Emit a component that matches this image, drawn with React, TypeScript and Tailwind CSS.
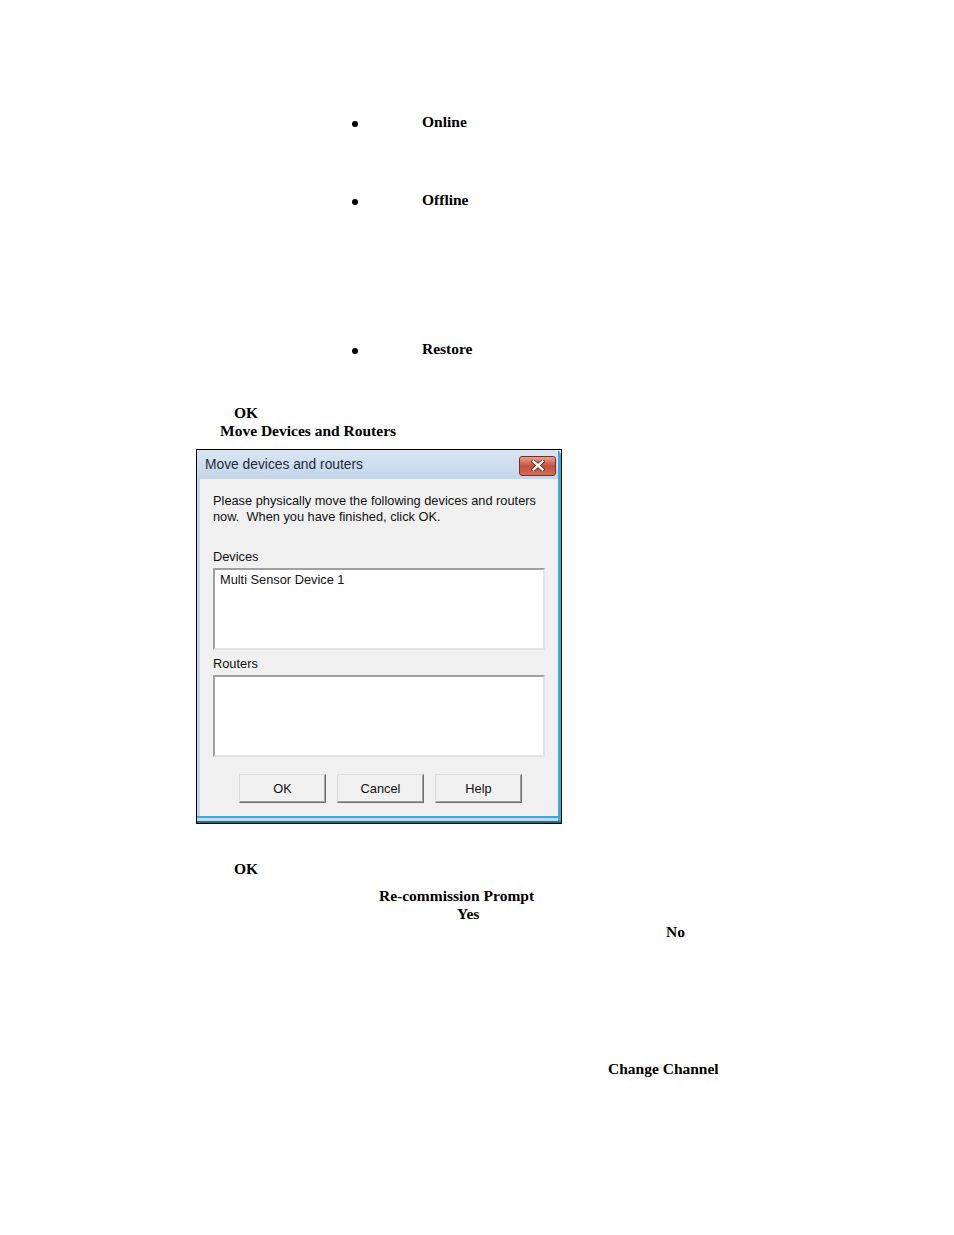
import React from 'react';

const serif = { fontFamily: '"Liberation Serif", "Times New Roman", serif' };
const ui = { fontFamily: '"Liberation Sans", Arial, sans-serif' };

function Bullet({ label, top }: { label: string; top: string }) {
  return (
    <div className={`flex items-center h-[18px] ${top}`}>
      <span className="w-[355px] text-right">
        <span className="inline-block w-[6px] h-[6px] rounded-full bg-black mr-[-3px]" />
      </span>
      <span className="ml-[67px] font-bold">{label}</span>
    </div>
  );
}

function WinButton({ label }: { label: string }) {
  return (
    <button
      className="w-[87px] h-[29px] bg-[#f0f0f0] border border-t-[#dcdcdc] border-l-[#dcdcdc] border-r-[#6e6e6e] border-b-[#6e6e6e] shadow-[inset_-1px_-1px_0_#a0a0a0] text-[12.8px] text-[#111]"
      style={ui}
    >
      {label}
    </button>
  );
}

function ListBox({ children }: { children?: React.ReactNode }) {
  return (
    <div className="mx-[13px] h-[82px] bg-white border-2 border-t-[#a0a0a0] border-l-[#a0a0a0] border-r-[#e3e3e3] border-b-[#e3e3e3] px-[5px] pt-[2px] text-[12.8px] leading-[16px] text-[#111]">
      {children}
    </div>
  );
}

function Dialog() {
  return (
    <div className="ml-[196px] w-[366px] border border-black bg-white">
      <div className="rounded-tl-[5px] rounded-tr-[5px] bg-[#c6d7ec] border-r-[3px] border-r-[#3fa8d5] pb-[3px]" style={ui}>
        <div className="flex items-center justify-between h-[29px] pl-[8px] pr-[2px] bg-gradient-to-b from-[#dbe6f3] to-[#c3d5eb]">
          <span className="text-[13.8px] text-[#1e2a3a] mt-[2px]">Move devices and routers</span>
          <span className="flex items-center justify-center w-[37px] h-[20px] mt-[2px] rounded-[3px] border border-[#7a2b25] bg-gradient-to-b from-[#e4a393] via-[#c8503c] to-[#cf6b58]">
            <svg width="14" height="11" viewBox="0 0 14 11">
              <path d="M2.5 1.5 L11.5 9.5 M11.5 1.5 L2.5 9.5" stroke="#5a2018" strokeWidth="4" strokeLinecap="square" />
              <path d="M2.5 1.5 L11.5 9.5 M11.5 1.5 L2.5 9.5" stroke="#ffffff" strokeWidth="2.4" strokeLinecap="square" />
            </svg>
          </span>
        </div>
        <div className="ml-[3px] bg-[#f0f0f0] text-[#111]">
          <div className="pt-[14px] pl-[13px] text-[12.8px] leading-[16px]">
            <div>Please physically move the following devices and routers</div>
            <div>now.&nbsp; When you have finished, click OK.</div>
          </div>
          <div className="pl-[13px] text-[12.8px] leading-[16px] pt-[24px] pb-[3px]">Devices</div>
          <ListBox>Multi Sensor Device 1</ListBox>
          <div className="pl-[13px] text-[12.8px] leading-[16px] pt-[6px] pb-[3px]">Routers</div>
          <ListBox />
          <div className="flex pl-[39px] gap-[11px] pt-[17px] pb-[13px]">
            <WinButton label="OK" />
            <WinButton label="Cancel" />
            <WinButton label="Help" />
          </div>
        </div>
        <div className="h-[2px] bg-[#3fa8d5]" />
      </div>
      <div className="h-[2px] bg-[#1e6f8f]" />
    </div>
  );
}

export default function App() {
  return (
    <div className="w-[954px] h-[1235px] bg-white text-black text-[15.5px]" style={serif}>
      <div className="pt-[113px]">
        <Bullet label="Online" top="" />
        <Bullet label="Offline" top="mt-[60px]" />
        <Bullet label="Restore" top="mt-[131px]" />
        <div className="mt-[46px] h-[18px] leading-[18px] pl-[234px] font-bold">OK</div>
        <div className="h-[18px] leading-[18px] pl-[220px] font-bold">Move Devices and Routers</div>
        <div className="mt-[9px]">
          <Dialog />
        </div>
        <div className="mt-[36px] h-[18px] leading-[18px] pl-[234px] font-bold">OK</div>
        <div className="mt-[9px] h-[18px] leading-[18px] pl-[379px] font-bold">Re-commission Prompt</div>
        <div className="h-[18px] leading-[18px] pl-[457px] font-bold">Yes</div>
        <div className="h-[18px] leading-[18px] pl-[666px] font-bold">No</div>
        <div className="mt-[119px] h-[18px] leading-[18px] pl-[608px] font-bold">Change Channel</div>
      </div>
    </div>
  );
}
